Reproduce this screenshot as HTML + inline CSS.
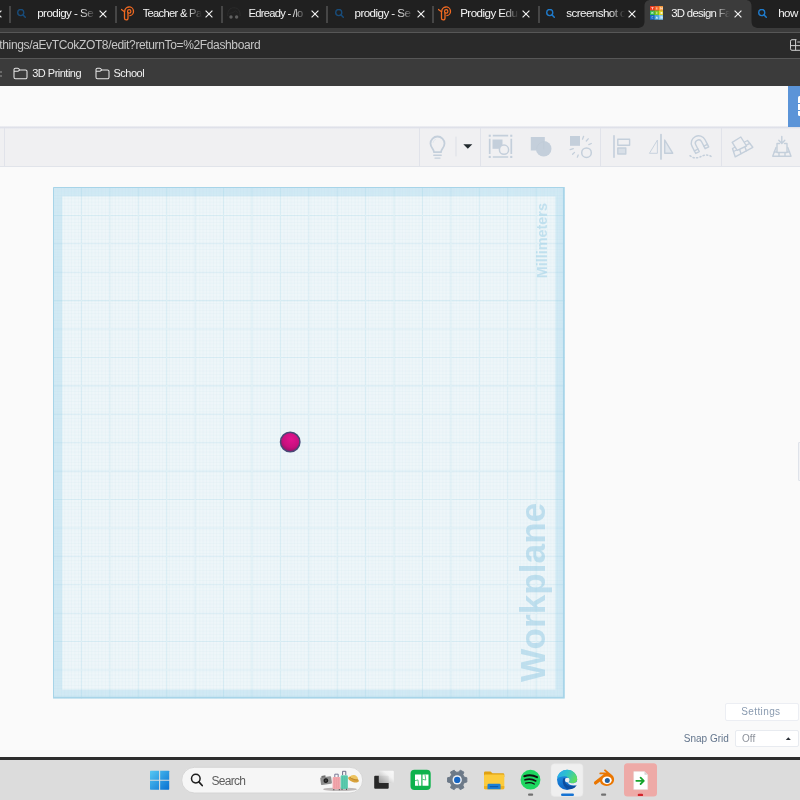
<!DOCTYPE html>
<html><head><meta charset="utf-8">
<style>
*{box-sizing:border-box;margin:0;padding:0}
body{will-change:transform}
html,body{width:800px;height:800px;overflow:hidden;background:#fafafa;font-family:"Liberation Sans",sans-serif;}
.abs{position:absolute}
#tabbar{position:absolute;left:0;top:0;width:800px;height:28px;background:#202020;}
#toolbar{position:absolute;left:0;top:28px;width:800px;height:58.400px;background:#3b3b3b;}
#addr{position:absolute;left:-20px;top:3.7px;width:840px;height:27.300px;background:#2a2a2a;border:1px solid #575757;border-radius:3px;}
#addr span{position:absolute;left:18.300px;top:5.300px;font-size:12px;line-height:14px;color:#c6c6c6;letter-spacing:-0.360px;white-space:nowrap}
.tab{position:absolute;top:0;height:28px;color:#f4f4f4;font-size:11.6px;line-height:26px;white-space:nowrap;letter-spacing:-0.55px;overflow:hidden;-webkit-mask-image:linear-gradient(90deg,#000 0,#000 44px,rgba(0,0,0,0.25) 55px,transparent 59px);mask-image:linear-gradient(90deg,#000 0,#000 44px,rgba(0,0,0,0.25) 55px,transparent 59px)}
.tsep{position:absolute;top:6px;width:2px;height:17px;background:#464646}
.x{position:absolute;top:8px;width:10px;height:10px}
#tc-top{position:absolute;left:0;top:86px;width:800px;height:42px;background:#fafafa;}
#tc-bar{position:absolute;left:0;top:126px;width:800px;height:41px;background:linear-gradient(#f3f3f6 0,#dddfe8 1.300px,#e6e7ee 2.200px,#f0f0f2 3px);border-bottom:1px solid #e1e4ea;}
.vd{position:absolute;top:128px;width:1px;height:38px;background:#e1e3ea}
#taskbar{position:absolute;left:0;top:756.500px;width:800px;height:44px;background:#dcdcdc;border-top:3.300px solid #2d2d2d}
#bm{position:absolute;left:0;top:31px;width:800px;height:27px}
.bmt{position:absolute;top:8px;font-size:11px;line-height:13px;color:#f1f1f1;letter-spacing:-0.5px;white-space:nowrap}
</style></head>
<body>
<div id="tabbar">
<svg class="abs" style="left:-6.5px;top:10px" width="8" height="8" viewBox="0 0 8 8"><path d="M0.6 0.6L7.4 7.4M7.4 0.6L0.6 7.4" stroke="#f2f2f2" stroke-width="1.15" fill="none"/></svg>
<svg class="abs" style="left:637px;top:0" width="122" height="28" viewBox="0 0 122 28"><path d="M0 28C5 28 7.5 26 7.5 21V6C7.5 2 10 0 13.5 0H108.5C112 0 114.5 2 114.5 6V21C114.5 26 117 28 122 28Z" fill="#3b3b3b"/></svg>
<div class="tsep" style="left:9.00px"></div>
<svg class="abs" style="left:17.3px;top:9px" width="10" height="10" viewBox="0 0 10 10"><circle cx="3.75" cy="3.5" r="3.05" fill="none" stroke="#184c7a" stroke-width="1.35"/><path d="M6.1 5.9L8.3 8.2" stroke="#184c7a" stroke-width="1.5" stroke-linecap="round"/></svg>
<div class="tab" style="left:37.20px;width:59.00px;font-size:11.6px;letter-spacing:-0.55px"><span>prodigy - Se</span></div>
<svg class="abs" style="left:99.3px;top:10px" width="8" height="8" viewBox="0 0 8 8"><path d="M0.6 0.6L7.4 7.4M7.4 0.6L0.6 7.4" stroke="#f2f2f2" stroke-width="1.15" fill="none"/></svg>
<div class="tsep" style="left:114.75px"></div>
<svg class="abs" style="left:121.05px;top:6px" width="15" height="15" viewBox="0 0 15 15" fill="none" stroke="#f26a21" stroke-linecap="round" stroke-linejoin="round"><path d="M0.4 3.5L3.5 5.7V12.2a1.75 1.75 0 0 0 3.5 0V6.8" stroke-width="1.3"/><path d="M3.7 5.4A4.4 4.4 0 1 1 8.9 9.7" stroke-width="1.3"/><circle cx="8.2" cy="5.4" r="1.7" stroke-width="1.2"/></svg>
<div class="tab" style="left:142.65px;width:59.30px;font-size:11.2px;letter-spacing:-0.7px"><span>Teacher &amp; Pa</span></div>
<svg class="abs" style="left:205.05px;top:10px" width="8" height="8" viewBox="0 0 8 8"><path d="M0.6 0.6L7.4 7.4M7.4 0.6L0.6 7.4" stroke="#f2f2f2" stroke-width="1.15" fill="none"/></svg>
<div class="tsep" style="left:220.50px"></div>
<svg class="abs" style="left:226.5px;top:7px" width="15" height="13" viewBox="0 0 15 13"><path d="M0.8 9C0.3 3.500 3 0.800 6.900 0.800S13.500 3.500 13 9" fill="none" stroke="#2c2c2c" stroke-width="1"/><path d="M2 6.500L6 5.500L8.500 3.800L11 5.800" fill="none" stroke="#2a2a2a" stroke-width="0.800"/><circle cx="4" cy="10" r="1.700" fill="#5f5f5f"/><circle cx="9.600" cy="10" r="1.700" fill="#5f5f5f"/></svg>
<div class="tab" style="left:248.40px;width:59.30px;font-size:11.2px;letter-spacing:-0.72px"><span>Edready - /lo</span></div>
<svg class="abs" style="left:310.8px;top:10px" width="8" height="8" viewBox="0 0 8 8"><path d="M0.6 0.6L7.4 7.4M7.4 0.6L0.6 7.4" stroke="#f2f2f2" stroke-width="1.15" fill="none"/></svg>
<div class="tsep" style="left:326.30px"></div>
<svg class="abs" style="left:334.6px;top:9px" width="10" height="10" viewBox="0 0 10 10"><circle cx="3.75" cy="3.5" r="3.05" fill="none" stroke="#184c7a" stroke-width="1.35"/><path d="M6.1 5.9L8.3 8.2" stroke="#184c7a" stroke-width="1.5" stroke-linecap="round"/></svg>
<div class="tab" style="left:354.50px;width:59.00px;font-size:11.6px;letter-spacing:-0.55px"><span>prodigy - Se</span></div>
<svg class="abs" style="left:416.6px;top:10px" width="8" height="8" viewBox="0 0 8 8"><path d="M0.6 0.6L7.4 7.4M7.4 0.6L0.6 7.4" stroke="#f2f2f2" stroke-width="1.15" fill="none"/></svg>
<div class="tsep" style="left:432.00px"></div>
<svg class="abs" style="left:438.3px;top:6px" width="15" height="15" viewBox="0 0 15 15" fill="none" stroke="#f26a21" stroke-linecap="round" stroke-linejoin="round"><path d="M0.4 3.5L3.5 5.7V12.2a1.75 1.75 0 0 0 3.5 0V6.8" stroke-width="1.3"/><path d="M3.7 5.4A4.4 4.4 0 1 1 8.9 9.7" stroke-width="1.3"/><circle cx="8.2" cy="5.4" r="1.7" stroke-width="1.2"/></svg>
<div class="tab" style="left:460.20px;width:59.00px;font-size:11.6px;letter-spacing:-0.55px"><span>Prodigy Edu</span></div>
<svg class="abs" style="left:522.3px;top:10px" width="8" height="8" viewBox="0 0 8 8"><path d="M0.6 0.6L7.4 7.4M7.4 0.6L0.6 7.4" stroke="#f2f2f2" stroke-width="1.15" fill="none"/></svg>
<div class="tsep" style="left:538.00px"></div>
<svg class="abs" style="left:546px;top:9px" width="10" height="10" viewBox="0 0 10 10"><circle cx="3.75" cy="3.5" r="3.05" fill="none" stroke="#1f7bcc" stroke-width="1.35"/><path d="M6.1 5.9L8.3 8.2" stroke="#1f7bcc" stroke-width="1.5" stroke-linecap="round"/></svg>
<div class="tab" style="left:566.20px;width:59.00px;font-size:11.6px;letter-spacing:-0.55px"><span>screenshot o</span></div>
<svg class="abs" style="left:628.3px;top:10px" width="8" height="8" viewBox="0 0 8 8"><path d="M0.6 0.6L7.4 7.4M7.4 0.6L0.6 7.4" stroke="#f2f2f2" stroke-width="1.15" fill="none"/></svg>
<svg class="abs" style="left:649.6px;top:6.45px" width="13.7" height="13.8" viewBox="0 0 14 14">
<rect x="0" y="0" width="4.8" height="4.8" fill="#ef3d22"/><rect x="4.6" y="0" width="4.8" height="4.8" fill="#f6682a"/><rect x="9.2" y="0" width="4.8" height="4.8" fill="#fb9a3a"/>
<rect x="0" y="4.6" width="4.8" height="4.8" fill="#2fb84d"/><rect x="4.6" y="4.6" width="4.8" height="4.8" fill="#7cc522"/><rect x="9.2" y="4.6" width="4.8" height="4.8" fill="#dfd224"/>
<rect x="0" y="9.2" width="4.8" height="4.8" fill="#1766c2"/><rect x="4.6" y="9.2" width="4.8" height="4.8" fill="#4ba9e2"/><rect x="9.2" y="9.2" width="4.8" height="4.8" fill="#7fc6f1"/>
<g fill="#fff" opacity="0.85"><path d="M1.4 1.3H3.6V2H2.9V3.6H2.1V2H1.4Z"/><rect x="6.6" y="1.3" width="0.8" height="2.3"/><path d="M10.5 1.3H11.2L12.3 2.8V1.3H12.9V3.6H12.2L11.1 2.1V3.6H10.5Z"/>
<path d="M1.5 5.9H2.2V6.9L3.1 5.9H3.9L2.9 7L3.9 8.2H3.1L2.2 7.2V8.2H1.5Z"/><rect x="6.6" y="5.9" width="0.8" height="2.3"/><rect x="10.8" y="6.1" width="1.9" height="1.9"/>
<path d="M1.6 10.5H3.3V11.1H2.3V12.2H3.3V12.8H1.6Z" opacity="0.6"/><path d="M7 10.4L8.3 12.8H5.7Z"/><path d="M10.6 10.5H12A1.1 1.15 0 0 1 12 12.8H10.6Z" opacity="0.7"/></g></svg>
<div class="tab" style="left:671.20px;width:60.00px;font-size:11.4px;letter-spacing:-0.7px"><span>3D design Fa</span></div>
<svg class="abs" style="left:734.3px;top:10px" width="8" height="8" viewBox="0 0 8 8"><path d="M0.6 0.6L7.4 7.4M7.4 0.6L0.6 7.4" stroke="#f2f2f2" stroke-width="1.15" fill="none"/></svg>
<svg class="abs" style="left:758.3px;top:9px" width="10" height="10" viewBox="0 0 10 10"><circle cx="3.75" cy="3.5" r="3.05" fill="none" stroke="#1f7bcc" stroke-width="1.35"/><path d="M6.1 5.9L8.3 8.2" stroke="#1f7bcc" stroke-width="1.5" stroke-linecap="round"/></svg>
<div class="tab" style="left:778.20px;width:59.00px;font-size:11.6px;letter-spacing:-0.55px"><span>how t</span></div>
</div>
<div id="toolbar"><div id="addr"><span>things/aEvTCokZOT8/edit?returnTo=%2Fdashboard</span></div><div id="bm">
<div class="abs" style="left:0;top:12px;width:1.5px;height:1.5px;background:#6a6a6a"></div><div class="abs" style="left:0;top:16px;width:1.5px;height:1.5px;background:#6a6a6a"></div>
<svg class="abs" style="left:12.5px;top:7.500px" width="15" height="13" viewBox="0 0 15 13"><path d="M1 3.2V10.3a1.500 1.500 0 0 0 1.500 1.500H12.500a1.500 1.500 0 0 0 1.500-1.500V4.500a1.500 1.500 0 0 0-1.500-1.500H6.800L5.600 1.700a1.300 1.300 0 0 0-1-.5H2.500A1.500 1.500 0 0 0 1 2.700Z M1 4.200H5.200L6.800 3" fill="none" stroke="#e6e6e6" stroke-width="1.050" stroke-linejoin="round"/></svg>
<span class="bmt" style="left:32.2px">3D Printing</span>
<svg class="abs" style="left:94.5px;top:7.500px" width="15" height="13" viewBox="0 0 15 13"><path d="M1 3.2V10.3a1.500 1.500 0 0 0 1.500 1.500H12.500a1.500 1.500 0 0 0 1.500-1.500V4.500a1.500 1.500 0 0 0-1.500-1.500H6.800L5.600 1.700a1.300 1.300 0 0 0-1-.5H2.500A1.500 1.500 0 0 0 1 2.700Z M1 4.200H5.200L6.800 3" fill="none" stroke="#e6e6e6" stroke-width="1.050" stroke-linejoin="round"/></svg>
<span class="bmt" style="left:113.5px">School</span>
</div>
<svg class="abs" style="left:789px;top:9px" width="12" height="16" viewBox="789 37 12 16"><path d="M796.500 39.700H792a1.500 1.500 0 0 0 -1.500 1.500V48.800a1.500 1.500 0 0 0 1.500 1.500H802 M795.600 39.700V50.300 M790.500 45.600H802 M797.300 42H801" fill="none" stroke="#cfcfcf" stroke-width="1"/></svg>
</div>
<div id="tc-top"></div>
<div id="tc-bar"></div>
<div class="vd" style="left:4px"></div><div class="vd" style="left:419.200px"></div><div class="vd" style="left:480.200px"></div><div class="vd" style="left:600.200px"></div><div class="vd" style="left:721.100px"></div>
<svg id="tcicons" class="abs" style="left:400px;top:128px" width="400" height="38" viewBox="400 128 400 38" fill="none" stroke="#c4cfdb" stroke-linecap="round" stroke-linejoin="round">
<!-- bulb -->
<path d="M434 152.2C434 149 430.500 147.800 430.500 143.500a7 7 0 0 1 14 0C444.500 147.800 441 149 441 152.200Z" stroke-width="1.800"/>
<path d="M433.800 155.300H441.200M435 158.100H440" stroke-width="1.400"/>
<path d="M433 142.500a4.500 4.500 0 0 1 2.600-3.300" stroke-width="0.9" stroke="#dfe5ec"/>
<path d="M456 137V156" stroke="#dcdfe6" stroke-width="1"/>
<path d="M463.300 144.200H472.300L467.800 148.800Z" fill="#222a2e" stroke="none"/>
<!-- group -->
<g stroke-width="1.700" stroke-linecap="butt"><path d="M492.800 135.700H508.200M492.800 157H508.200M489.700 138.800V154M511.300 138.800V154"/>
<rect x="492.500" y="139.500" width="10" height="9.300" fill="#c4cfdb" stroke="none"/>
<circle cx="504" cy="149.700" r="4.600" fill="#f0f0f2" stroke-width="1.500"/></g>
<g fill="#c4cfdb" stroke="none"><rect x="488.700" y="134.700" width="2.100" height="2.100"/><rect x="510.200" y="134.700" width="2.100" height="2.100"/><rect x="488.700" y="155.900" width="2.100" height="2.100"/><rect x="510.200" y="155.900" width="2.100" height="2.100"/></g>
<!-- union -->
<rect x="530.800" y="137" width="14" height="13.500" fill="#c4cfdb" stroke="none"/><circle cx="543.700" cy="148.800" r="7.800" fill="#c4cfdb" stroke="none"/>
<path d="M543.700 141.800a7 7 0 0 0 -7 7M543.700 141.800V148.800" stroke="#bcc8d5" stroke-width="0.500"/>
<!-- ungroup -->
<rect x="570" y="136" width="10" height="9.800" fill="#c4cfdb" stroke="none"/>
<circle cx="586.500" cy="152.700" r="4.800" stroke-width="1.500"/>
<path d="M582.500 139.200L583.600 136.300M586.300 141L588.200 138.800M588.800 144.600L591.300 143.500M573.300 148.700L570.200 149.700M574.500 152.400L572.600 154.300M578.200 155L577.300 157.200" stroke-width="1.300"/>
<!-- align -->
<path d="M614 135.800V157.200" stroke-width="1.600"/>
<rect x="617.800" y="139.300" width="11.800" height="6" stroke-width="1.400" fill="#f0f0f2"/>
<rect x="617.800" y="148" width="8" height="6" stroke-width="1.400" fill="#d8dfe7"/>
<!-- mirror -->
<path d="M661 134.500V159" stroke-width="1.700"/>
<path d="M657.400 140.500V153.300H649.800Z" stroke-width="0.900"/>
<path d="M664.700 140V153.200H672.700Z" stroke-width="1.400" fill="#e2e7ed"/>
<!-- magnet -->
<g transform="translate(698.800 143.500) rotate(-27)" stroke-width="1.400"><path d="M-7.300 7.500V-0.500a7.300 7.300 0 0 1 14.600 0V7.500H3.300V-0.300a3.300 3.300 0 0 0 -6.600 0V7.500Z"/><path d="M-7.300 4.600H-3.300M3.300 4.600H7.300"/></g>
<path d="M690 155.700C694 159 698 158 701 156.500S708 154 712 157" stroke-width="1.500" stroke-dasharray="1.200 2.300"/>
<!-- workplane -->
<g stroke-width="1.400"><path d="M732.500 148.500L747.500 140.500L752.800 147.300L735.200 156.800Z"/><path d="M733.600 151.500L749.800 143.300M739.300 148.400L741 153.700M744.300 145.600L746.400 150.800"/><path d="M732.200 142.300L740.800 137L746.500 146L737.200 150.300Z" fill="#f0f0f2"/></g>
<!-- drop -->
<g stroke-width="1.400"><path d="M776 147.500L772.700 156.200H791L787.800 147.500"/><path d="M774.300 152H789.500M779 152.300V156M785 152.300V156"/><path d="M779.500 143.500H777V152.500H787V143.500H784.500" fill="#f0f0f2"/><path d="M781.800 136.500V143.300M778.800 140.300L781.800 143.500L784.800 140.300"/></g>
</svg>
<div class="abs" style="left:788px;top:86px;width:12px;height:40.500px;background:#5b94d8"></div>
<div class="abs" style="left:798.200px;top:96.300px;width:3px;height:7px;background:#fff;border-radius:1.500px 0 0 0"></div><div class="abs" style="left:798.200px;top:104.200px;width:3px;height:6px;background:#fff"></div><div class="abs" style="left:798.200px;top:111px;width:3px;height:5.300px;background:#fff;border-radius:0 0 0 1.500px"></div>
<div class="abs" style="left:797.800px;top:442px;width:4px;height:39px;border:1px solid #dfe3ea;background:#f2f3f6;border-radius:1px"></div>


<svg id="wp" class="abs" style="left:0;top:167px" width="800" height="590" viewBox="0 167 800 590">
<defs><radialGradient id="sph" cx="0.55" cy="0.35" r="0.7"><stop offset="0" stop-color="#e3128f"/><stop offset="0.6" stop-color="#c80f7e"/><stop offset="1" stop-color="#8a0f60"/></radialGradient></defs>
<rect x="53" y="187" width="511.6" height="511.4" fill="#fefefd"/>
<path d="M53 187H564.6V698.4H53Z M62.3 196.4V689.4H555.4V196.4Z" fill="#ddf0f8" fill-rule="evenodd"/>
<text transform="translate(545.4 682) rotate(-90)" font-family="Liberation Sans" font-weight="bold" font-size="35.2" fill="#b5dbec" fill-opacity="0.740">Workplane</text>
<text transform="translate(547 278.3) rotate(-90)" font-family="Liberation Sans" font-weight="bold" font-size="14.4" fill="#b5dbec" fill-opacity="0.7">Millimeters</text>
<path d="M54.42 187.0V698.4M55.84 187.0V698.4M57.26 187.0V698.4M58.68 187.0V698.4M60.11 187.0V698.4M61.53 187.0V698.4M62.95 187.0V698.4M64.37 187.0V698.4M65.79 187.0V698.4M67.21 187.0V698.4M68.63 187.0V698.4M70.05 187.0V698.4M71.47 187.0V698.4M72.90 187.0V698.4M74.32 187.0V698.4M75.74 187.0V698.4M77.16 187.0V698.4M78.58 187.0V698.4M80.00 187.0V698.4M82.84 187.0V698.4M84.26 187.0V698.4M85.69 187.0V698.4M87.11 187.0V698.4M88.53 187.0V698.4M89.95 187.0V698.4M91.37 187.0V698.4M92.79 187.0V698.4M94.21 187.0V698.4M95.63 187.0V698.4M97.05 187.0V698.4M98.48 187.0V698.4M99.90 187.0V698.4M101.32 187.0V698.4M102.74 187.0V698.4M104.16 187.0V698.4M105.58 187.0V698.4M107.00 187.0V698.4M108.42 187.0V698.4M111.27 187.0V698.4M112.69 187.0V698.4M114.11 187.0V698.4M115.53 187.0V698.4M116.95 187.0V698.4M118.37 187.0V698.4M119.79 187.0V698.4M121.21 187.0V698.4M122.63 187.0V698.4M124.06 187.0V698.4M125.48 187.0V698.4M126.90 187.0V698.4M128.32 187.0V698.4M129.74 187.0V698.4M131.16 187.0V698.4M132.58 187.0V698.4M134.00 187.0V698.4M135.42 187.0V698.4M136.85 187.0V698.4M139.69 187.0V698.4M141.11 187.0V698.4M142.53 187.0V698.4M143.95 187.0V698.4M145.37 187.0V698.4M146.79 187.0V698.4M148.21 187.0V698.4M149.64 187.0V698.4M151.06 187.0V698.4M152.48 187.0V698.4M153.90 187.0V698.4M155.32 187.0V698.4M156.74 187.0V698.4M158.16 187.0V698.4M159.58 187.0V698.4M161.00 187.0V698.4M162.43 187.0V698.4M163.85 187.0V698.4M165.27 187.0V698.4M168.11 187.0V698.4M169.53 187.0V698.4M170.95 187.0V698.4M172.37 187.0V698.4M173.79 187.0V698.4M175.22 187.0V698.4M176.64 187.0V698.4M178.06 187.0V698.4M179.48 187.0V698.4M180.90 187.0V698.4M182.32 187.0V698.4M183.74 187.0V698.4M185.16 187.0V698.4M186.58 187.0V698.4M188.01 187.0V698.4M189.43 187.0V698.4M190.85 187.0V698.4M192.27 187.0V698.4M193.69 187.0V698.4M196.53 187.0V698.4M197.95 187.0V698.4M199.37 187.0V698.4M200.80 187.0V698.4M202.22 187.0V698.4M203.64 187.0V698.4M205.06 187.0V698.4M206.48 187.0V698.4M207.90 187.0V698.4M209.32 187.0V698.4M210.74 187.0V698.4M212.16 187.0V698.4M213.59 187.0V698.4M215.01 187.0V698.4M216.43 187.0V698.4M217.85 187.0V698.4M219.27 187.0V698.4M220.69 187.0V698.4M222.11 187.0V698.4M224.95 187.0V698.4M226.38 187.0V698.4M227.80 187.0V698.4M229.22 187.0V698.4M230.64 187.0V698.4M232.06 187.0V698.4M233.48 187.0V698.4M234.90 187.0V698.4M236.32 187.0V698.4M237.74 187.0V698.4M239.17 187.0V698.4M240.59 187.0V698.4M242.01 187.0V698.4M243.43 187.0V698.4M244.85 187.0V698.4M246.27 187.0V698.4M247.69 187.0V698.4M249.11 187.0V698.4M250.53 187.0V698.4M253.38 187.0V698.4M254.80 187.0V698.4M256.22 187.0V698.4M257.64 187.0V698.4M259.06 187.0V698.4M260.48 187.0V698.4M261.90 187.0V698.4M263.32 187.0V698.4M264.75 187.0V698.4M266.17 187.0V698.4M267.59 187.0V698.4M269.01 187.0V698.4M270.43 187.0V698.4M271.85 187.0V698.4M273.27 187.0V698.4M274.69 187.0V698.4M276.11 187.0V698.4M277.54 187.0V698.4M278.96 187.0V698.4M281.80 187.0V698.4M283.22 187.0V698.4M284.64 187.0V698.4M286.06 187.0V698.4M287.48 187.0V698.4M288.90 187.0V698.4M290.33 187.0V698.4M291.75 187.0V698.4M293.17 187.0V698.4M294.59 187.0V698.4M296.01 187.0V698.4M297.43 187.0V698.4M298.85 187.0V698.4M300.27 187.0V698.4M301.69 187.0V698.4M303.12 187.0V698.4M304.54 187.0V698.4M305.96 187.0V698.4M307.38 187.0V698.4M310.22 187.0V698.4M311.64 187.0V698.4M313.06 187.0V698.4M314.48 187.0V698.4M315.91 187.0V698.4M317.33 187.0V698.4M318.75 187.0V698.4M320.17 187.0V698.4M321.59 187.0V698.4M323.01 187.0V698.4M324.43 187.0V698.4M325.85 187.0V698.4M327.27 187.0V698.4M328.70 187.0V698.4M330.12 187.0V698.4M331.54 187.0V698.4M332.96 187.0V698.4M334.38 187.0V698.4M335.80 187.0V698.4M338.64 187.0V698.4M340.06 187.0V698.4M341.49 187.0V698.4M342.91 187.0V698.4M344.33 187.0V698.4M345.75 187.0V698.4M347.17 187.0V698.4M348.59 187.0V698.4M350.01 187.0V698.4M351.43 187.0V698.4M352.85 187.0V698.4M354.28 187.0V698.4M355.70 187.0V698.4M357.12 187.0V698.4M358.54 187.0V698.4M359.96 187.0V698.4M361.38 187.0V698.4M362.80 187.0V698.4M364.22 187.0V698.4M367.07 187.0V698.4M368.49 187.0V698.4M369.91 187.0V698.4M371.33 187.0V698.4M372.75 187.0V698.4M374.17 187.0V698.4M375.59 187.0V698.4M377.01 187.0V698.4M378.43 187.0V698.4M379.86 187.0V698.4M381.28 187.0V698.4M382.70 187.0V698.4M384.12 187.0V698.4M385.54 187.0V698.4M386.96 187.0V698.4M388.38 187.0V698.4M389.80 187.0V698.4M391.22 187.0V698.4M392.65 187.0V698.4M395.49 187.0V698.4M396.91 187.0V698.4M398.33 187.0V698.4M399.75 187.0V698.4M401.17 187.0V698.4M402.59 187.0V698.4M404.01 187.0V698.4M405.44 187.0V698.4M406.86 187.0V698.4M408.28 187.0V698.4M409.70 187.0V698.4M411.12 187.0V698.4M412.54 187.0V698.4M413.96 187.0V698.4M415.38 187.0V698.4M416.80 187.0V698.4M418.23 187.0V698.4M419.65 187.0V698.4M421.07 187.0V698.4M423.91 187.0V698.4M425.33 187.0V698.4M426.75 187.0V698.4M428.17 187.0V698.4M429.59 187.0V698.4M431.02 187.0V698.4M432.44 187.0V698.4M433.86 187.0V698.4M435.28 187.0V698.4M436.70 187.0V698.4M438.12 187.0V698.4M439.54 187.0V698.4M440.96 187.0V698.4M442.38 187.0V698.4M443.81 187.0V698.4M445.23 187.0V698.4M446.65 187.0V698.4M448.07 187.0V698.4M449.49 187.0V698.4M452.33 187.0V698.4M453.75 187.0V698.4M455.17 187.0V698.4M456.60 187.0V698.4M458.02 187.0V698.4M459.44 187.0V698.4M460.86 187.0V698.4M462.28 187.0V698.4M463.70 187.0V698.4M465.12 187.0V698.4M466.54 187.0V698.4M467.96 187.0V698.4M469.39 187.0V698.4M470.81 187.0V698.4M472.23 187.0V698.4M473.65 187.0V698.4M475.07 187.0V698.4M476.49 187.0V698.4M477.91 187.0V698.4M480.75 187.0V698.4M482.18 187.0V698.4M483.60 187.0V698.4M485.02 187.0V698.4M486.44 187.0V698.4M487.86 187.0V698.4M489.28 187.0V698.4M490.70 187.0V698.4M492.12 187.0V698.4M493.54 187.0V698.4M494.97 187.0V698.4M496.39 187.0V698.4M497.81 187.0V698.4M499.23 187.0V698.4M500.65 187.0V698.4M502.07 187.0V698.4M503.49 187.0V698.4M504.91 187.0V698.4M506.33 187.0V698.4M509.18 187.0V698.4M510.60 187.0V698.4M512.02 187.0V698.4M513.44 187.0V698.4M514.86 187.0V698.4M516.28 187.0V698.4M517.70 187.0V698.4M519.12 187.0V698.4M520.55 187.0V698.4M521.97 187.0V698.4M523.39 187.0V698.4M524.81 187.0V698.4M526.23 187.0V698.4M527.65 187.0V698.4M529.07 187.0V698.4M530.49 187.0V698.4M531.91 187.0V698.4M533.34 187.0V698.4M534.76 187.0V698.4M537.60 187.0V698.4M539.02 187.0V698.4M540.44 187.0V698.4M541.86 187.0V698.4M543.28 187.0V698.4M544.70 187.0V698.4M546.13 187.0V698.4M547.55 187.0V698.4M548.97 187.0V698.4M550.39 187.0V698.4M551.81 187.0V698.4M553.23 187.0V698.4M554.65 187.0V698.4M556.07 187.0V698.4M557.49 187.0V698.4M558.92 187.0V698.4M560.34 187.0V698.4M561.76 187.0V698.4M563.18 187.0V698.4M53.0 188.42H564.6M53.0 189.84H564.6M53.0 191.26H564.6M53.0 192.68H564.6M53.0 194.10H564.6M53.0 195.52H564.6M53.0 196.94H564.6M53.0 198.36H564.6M53.0 199.78H564.6M53.0 201.21H564.6M53.0 202.63H564.6M53.0 204.05H564.6M53.0 205.47H564.6M53.0 206.89H564.6M53.0 208.31H564.6M53.0 209.73H564.6M53.0 211.15H564.6M53.0 212.57H564.6M53.0 213.99H564.6M53.0 216.83H564.6M53.0 218.25H564.6M53.0 219.67H564.6M53.0 221.09H564.6M53.0 222.51H564.6M53.0 223.93H564.6M53.0 225.36H564.6M53.0 226.78H564.6M53.0 228.20H564.6M53.0 229.62H564.6M53.0 231.04H564.6M53.0 232.46H564.6M53.0 233.88H564.6M53.0 235.30H564.6M53.0 236.72H564.6M53.0 238.14H564.6M53.0 239.56H564.6M53.0 240.98H564.6M53.0 242.40H564.6M53.0 245.24H564.6M53.0 246.66H564.6M53.0 248.08H564.6M53.0 249.50H564.6M53.0 250.93H564.6M53.0 252.35H564.6M53.0 253.77H564.6M53.0 255.19H564.6M53.0 256.61H564.6M53.0 258.03H564.6M53.0 259.45H564.6M53.0 260.87H564.6M53.0 262.29H564.6M53.0 263.71H564.6M53.0 265.13H564.6M53.0 266.55H564.6M53.0 267.97H564.6M53.0 269.39H564.6M53.0 270.81H564.6M53.0 273.65H564.6M53.0 275.07H564.6M53.0 276.50H564.6M53.0 277.92H564.6M53.0 279.34H564.6M53.0 280.76H564.6M53.0 282.18H564.6M53.0 283.60H564.6M53.0 285.02H564.6M53.0 286.44H564.6M53.0 287.86H564.6M53.0 289.28H564.6M53.0 290.70H564.6M53.0 292.12H564.6M53.0 293.54H564.6M53.0 294.96H564.6M53.0 296.38H564.6M53.0 297.80H564.6M53.0 299.22H564.6M53.0 302.06H564.6M53.0 303.49H564.6M53.0 304.91H564.6M53.0 306.33H564.6M53.0 307.75H564.6M53.0 309.17H564.6M53.0 310.59H564.6M53.0 312.01H564.6M53.0 313.43H564.6M53.0 314.85H564.6M53.0 316.27H564.6M53.0 317.69H564.6M53.0 319.11H564.6M53.0 320.53H564.6M53.0 321.95H564.6M53.0 323.37H564.6M53.0 324.79H564.6M53.0 326.21H564.6M53.0 327.63H564.6M53.0 330.48H564.6M53.0 331.90H564.6M53.0 333.32H564.6M53.0 334.74H564.6M53.0 336.16H564.6M53.0 337.58H564.6M53.0 339.00H564.6M53.0 340.42H564.6M53.0 341.84H564.6M53.0 343.26H564.6M53.0 344.68H564.6M53.0 346.10H564.6M53.0 347.52H564.6M53.0 348.94H564.6M53.0 350.36H564.6M53.0 351.78H564.6M53.0 353.21H564.6M53.0 354.63H564.6M53.0 356.05H564.6M53.0 358.89H564.6M53.0 360.31H564.6M53.0 361.73H564.6M53.0 363.15H564.6M53.0 364.57H564.6M53.0 365.99H564.6M53.0 367.41H564.6M53.0 368.83H564.6M53.0 370.25H564.6M53.0 371.67H564.6M53.0 373.09H564.6M53.0 374.51H564.6M53.0 375.93H564.6M53.0 377.35H564.6M53.0 378.77H564.6M53.0 380.20H564.6M53.0 381.62H564.6M53.0 383.04H564.6M53.0 384.46H564.6M53.0 387.30H564.6M53.0 388.72H564.6M53.0 390.14H564.6M53.0 391.56H564.6M53.0 392.98H564.6M53.0 394.40H564.6M53.0 395.82H564.6M53.0 397.24H564.6M53.0 398.66H564.6M53.0 400.08H564.6M53.0 401.50H564.6M53.0 402.92H564.6M53.0 404.35H564.6M53.0 405.77H564.6M53.0 407.19H564.6M53.0 408.61H564.6M53.0 410.03H564.6M53.0 411.45H564.6M53.0 412.87H564.6M53.0 415.71H564.6M53.0 417.13H564.6M53.0 418.55H564.6M53.0 419.97H564.6M53.0 421.39H564.6M53.0 422.81H564.6M53.0 424.23H564.6M53.0 425.65H564.6M53.0 427.07H564.6M53.0 428.49H564.6M53.0 429.91H564.6M53.0 431.34H564.6M53.0 432.76H564.6M53.0 434.18H564.6M53.0 435.60H564.6M53.0 437.02H564.6M53.0 438.44H564.6M53.0 439.86H564.6M53.0 441.28H564.6M53.0 444.12H564.6M53.0 445.54H564.6M53.0 446.96H564.6M53.0 448.38H564.6M53.0 449.80H564.6M53.0 451.22H564.6M53.0 452.64H564.6M53.0 454.06H564.6M53.0 455.49H564.6M53.0 456.91H564.6M53.0 458.33H564.6M53.0 459.75H564.6M53.0 461.17H564.6M53.0 462.59H564.6M53.0 464.01H564.6M53.0 465.43H564.6M53.0 466.85H564.6M53.0 468.27H564.6M53.0 469.69H564.6M53.0 472.53H564.6M53.0 473.95H564.6M53.0 475.37H564.6M53.0 476.79H564.6M53.0 478.21H564.6M53.0 479.63H564.6M53.0 481.06H564.6M53.0 482.48H564.6M53.0 483.90H564.6M53.0 485.32H564.6M53.0 486.74H564.6M53.0 488.16H564.6M53.0 489.58H564.6M53.0 491.00H564.6M53.0 492.42H564.6M53.0 493.84H564.6M53.0 495.26H564.6M53.0 496.68H564.6M53.0 498.10H564.6M53.0 500.94H564.6M53.0 502.36H564.6M53.0 503.78H564.6M53.0 505.20H564.6M53.0 506.62H564.6M53.0 508.05H564.6M53.0 509.47H564.6M53.0 510.89H564.6M53.0 512.31H564.6M53.0 513.73H564.6M53.0 515.15H564.6M53.0 516.57H564.6M53.0 517.99H564.6M53.0 519.41H564.6M53.0 520.83H564.6M53.0 522.25H564.6M53.0 523.67H564.6M53.0 525.09H564.6M53.0 526.51H564.6M53.0 529.35H564.6M53.0 530.77H564.6M53.0 532.19H564.6M53.0 533.62H564.6M53.0 535.04H564.6M53.0 536.46H564.6M53.0 537.88H564.6M53.0 539.30H564.6M53.0 540.72H564.6M53.0 542.14H564.6M53.0 543.56H564.6M53.0 544.98H564.6M53.0 546.40H564.6M53.0 547.82H564.6M53.0 549.24H564.6M53.0 550.66H564.6M53.0 552.08H564.6M53.0 553.50H564.6M53.0 554.92H564.6M53.0 557.76H564.6M53.0 559.19H564.6M53.0 560.61H564.6M53.0 562.03H564.6M53.0 563.45H564.6M53.0 564.87H564.6M53.0 566.29H564.6M53.0 567.71H564.6M53.0 569.13H564.6M53.0 570.55H564.6M53.0 571.97H564.6M53.0 573.39H564.6M53.0 574.81H564.6M53.0 576.23H564.6M53.0 577.65H564.6M53.0 579.07H564.6M53.0 580.49H564.6M53.0 581.91H564.6M53.0 583.34H564.6M53.0 586.18H564.6M53.0 587.60H564.6M53.0 589.02H564.6M53.0 590.44H564.6M53.0 591.86H564.6M53.0 593.28H564.6M53.0 594.70H564.6M53.0 596.12H564.6M53.0 597.54H564.6M53.0 598.96H564.6M53.0 600.38H564.6M53.0 601.80H564.6M53.0 603.22H564.6M53.0 604.64H564.6M53.0 606.06H564.6M53.0 607.48H564.6M53.0 608.90H564.6M53.0 610.33H564.6M53.0 611.75H564.6M53.0 614.59H564.6M53.0 616.01H564.6M53.0 617.43H564.6M53.0 618.85H564.6M53.0 620.27H564.6M53.0 621.69H564.6M53.0 623.11H564.6M53.0 624.53H564.6M53.0 625.95H564.6M53.0 627.37H564.6M53.0 628.79H564.6M53.0 630.21H564.6M53.0 631.63H564.6M53.0 633.05H564.6M53.0 634.48H564.6M53.0 635.90H564.6M53.0 637.32H564.6M53.0 638.74H564.6M53.0 640.16H564.6M53.0 643.00H564.6M53.0 644.42H564.6M53.0 645.84H564.6M53.0 647.26H564.6M53.0 648.68H564.6M53.0 650.10H564.6M53.0 651.52H564.6M53.0 652.94H564.6M53.0 654.36H564.6M53.0 655.78H564.6M53.0 657.20H564.6M53.0 658.62H564.6M53.0 660.05H564.6M53.0 661.47H564.6M53.0 662.89H564.6M53.0 664.31H564.6M53.0 665.73H564.6M53.0 667.15H564.6M53.0 668.57H564.6M53.0 671.41H564.6M53.0 672.83H564.6M53.0 674.25H564.6M53.0 675.67H564.6M53.0 677.09H564.6M53.0 678.51H564.6M53.0 679.93H564.6M53.0 681.35H564.6M53.0 682.77H564.6M53.0 684.19H564.6M53.0 685.62H564.6M53.0 687.04H564.6M53.0 688.46H564.6M53.0 689.88H564.6M53.0 691.30H564.6M53.0 692.72H564.6M53.0 694.14H564.6M53.0 695.56H564.6M53.0 696.98H564.6" stroke="#9ccfe0" stroke-width="0.34" stroke-opacity="0.42" fill="none"/>
<path d="M81.42 187.0V698.4M53.0 215.41H564.6M109.84 187.0V698.4M53.0 243.82H564.6M138.27 187.0V698.4M53.0 272.23H564.6M166.69 187.0V698.4M53.0 300.64H564.6M195.11 187.0V698.4M53.0 329.06H564.6M223.53 187.0V698.4M53.0 357.47H564.6M251.96 187.0V698.4M53.0 385.88H564.6M280.38 187.0V698.4M53.0 414.29H564.6M308.80 187.0V698.4M53.0 442.70H564.6M337.22 187.0V698.4M53.0 471.11H564.6M365.64 187.0V698.4M53.0 499.52H564.6M394.07 187.0V698.4M53.0 527.93H564.6M422.49 187.0V698.4M53.0 556.34H564.6M450.91 187.0V698.4M53.0 584.76H564.6M479.33 187.0V698.4M53.0 613.17H564.6M507.76 187.0V698.4M53.0 641.58H564.6M536.18 187.0V698.4M53.0 669.99H564.6" stroke="#8ecbe2" stroke-width="1.050" stroke-opacity="0.3" fill="none"/>
<path d="M53.5 698V187.5H564" stroke="#a7d4e8" stroke-width="1" fill="none"/>
<path d="M563.8 187V697.6H53" stroke="#a7d4e8" stroke-width="1.8" fill="none"/>
<circle cx="290.2" cy="442" r="9.700" fill="url(#sph)" stroke="#4a4776" stroke-width="1.500" style="filter:blur(0.350px)"/>
</svg>
<div class="abs" style="left:724.5px;top:702.5px;width:74.500px;height:18px;background:#fff;border:1px solid #eceef3;border-radius:2px"></div>
<div class="abs" style="left:741.200px;top:705.400px;font-size:10px;letter-spacing:0.400px;line-height:13px;color:#8a9bb0;white-space:nowrap">Settings</div>
<div class="abs" style="left:683.800px;top:731.500px;font-size:10px;line-height:13px;color:#63758c;white-space:nowrap">Snap Grid</div>
<div class="abs" style="left:734.700px;top:729.500px;width:64.300px;height:17.500px;background:#fff;border:1px solid #e8ebf0;border-radius:2px"></div>
<div class="abs" style="left:742px;top:731.700px;font-size:10px;line-height:13px;color:#8d929b;white-space:nowrap">Off</div>
<svg class="abs" style="left:785px;top:736px" width="7" height="5" viewBox="0 0 7 5"><path d="M0.800 3.900L3.300 1.200L5.800 3.900Z" fill="#2a2f36"/></svg>
<div id="taskbar"></div>
<svg class="abs" style="left:130px;top:760px" width="540" height="40" viewBox="130 760 540 40">
<defs>
<linearGradient id="win" x1="0" y1="0" x2="1" y2="1"><stop offset="0" stop-color="#56c8f3"/><stop offset="1" stop-color="#0870d1"/></linearGradient>
<linearGradient id="edg1" x1="0" y1="0" x2="1" y2="1"><stop offset="0" stop-color="#35c1f1"/><stop offset="0.500" stop-color="#1b7fd2"/><stop offset="1" stop-color="#0c4a9e"/></linearGradient>
<linearGradient id="edg2" x1="0" y1="0.200" x2="1" y2="0.600"><stop offset="0" stop-color="#2aa9f0"/><stop offset="0.450" stop-color="#2ec2c9"/><stop offset="1" stop-color="#5fe05a"/></linearGradient><linearGradient id="edgb" x1="0.200" y1="0" x2="0.600" y2="1"><stop offset="0" stop-color="#2399e6"/><stop offset="1" stop-color="#0b5cc0"/></linearGradient>
<linearGradient id="tv" x1="0" y1="1" x2="1" y2="0"><stop offset="0" stop-color="#a4a4a4"/><stop offset="0.450" stop-color="#dcdcdc"/><stop offset="0.650" stop-color="#f4f4f4"/><stop offset="1" stop-color="#fcfcfc"/></linearGradient>
</defs>
<!-- windows logo -->
<g fill="url(#win)"><rect x="150" y="770.700" width="19.200" height="19" rx="0.600"/></g>
<path d="M159.600 770V790.500M149.500 780.200H170" stroke="#dcdcdc" stroke-width="1.100"/>
<!-- search pill -->
<rect x="181.700" y="767.300" width="181" height="25.700" rx="12.850" fill="#f6f6f6" stroke="#d2d2d2" stroke-width="0.900"/>
<circle cx="195.800" cy="778.600" r="4.300" fill="none" stroke="#1e1e1e" stroke-width="1.500"/><path d="M198.900 781.900L202.200 785.500" stroke="#1e1e1e" stroke-width="1.700" stroke-linecap="round"/>
<text x="211.500" y="784.800" font-family="Liberation Sans" font-size="12" letter-spacing="-0.700" fill="#5e5e5e">Search</text>
<!-- luggage art -->
<ellipse cx="340" cy="789.300" rx="17" ry="1.800" fill="#a9a3a3" opacity="0.750"/>
<g transform="rotate(-8 326 780)"><rect x="320.500" y="776.800" width="11" height="7.600" rx="1" fill="#8d8d8d"/><rect x="322" y="775.300" width="4" height="2" fill="#6e6e6e"/><circle cx="325.800" cy="780.600" r="2.400" fill="#1f1f1f"/><circle cx="325.800" cy="780.600" r="1" fill="#444"/></g>
<path d="M334.800 777V774.200H338.200V777" fill="none" stroke="#6d6a8a" stroke-width="0.900"/>
<rect x="332.600" y="776.900" width="7.900" height="12.300" rx="1.200" fill="#f2a7ad"/><path d="M334.600 778V788.500M336.600 778V788.500M338.500 778V788.500" stroke="#e8949c" stroke-width="0.500"/>
<path d="M342.600 775.200V771.300H345.800V775.200" fill="none" stroke="#5b5d7d" stroke-width="0.900"/>
<rect x="340.700" y="775.200" width="7.200" height="13.700" rx="1.200" fill="#5fcdb2"/><path d="M342.500 776V788.200M344.300 776V788.200M346.100 776V788.200" stroke="#48b89c" stroke-width="0.500"/>
<rect x="333.300" y="789" width="1" height="1.200" fill="#555"/><rect x="338.800" y="789" width="1" height="1.200" fill="#555"/><rect x="341.500" y="788.700" width="1" height="1.300" fill="#555"/><rect x="346" y="788.700" width="1" height="1.300" fill="#555"/>
<g transform="rotate(18 354 778)"><ellipse cx="354" cy="779.600" rx="5.600" ry="2.600" fill="#d9a23c"/><path d="M349.800 778.800C350 774 358 774 358.200 778.800Z" fill="#edc461"/><path d="M349.800 778.500C352 779.800 356 779.800 358.200 778.500" stroke="#b9822a" stroke-width="0.800" fill="none"/></g>
<!-- task view -->
<rect x="374.200" y="775.800" width="14.500" height="13" rx="1" fill="#272727"/>
<rect x="378.800" y="770.800" width="15" height="12.300" rx="1" fill="url(#tv)" opacity="0.930"/>
<!-- green app -->
<rect x="410.500" y="769.800" width="20.200" height="20.200" rx="4" fill="#0eb24c"/>
<path d="M415 774.600H421.300V785.800H415Z M422.500 774.600H428.500V785.800H422.500Z" fill="#fff"/>
<path d="M415 780.700L418 779.900L418.600 785.800M422.500 779.300L425.800 780L425 774.600" stroke="#0eb24c" stroke-width="0.700" fill="none"/>
<!-- gear -->
<g transform="translate(457.2 779.9) rotate(90) scale(0.93)"><path d="M-2.300 -10.400H2.300L3 -7.500L5.600 -6.100L8.400 -7.200L10.500 -3.300L8.300 -1.300V1.300L10.500 3.300L8.400 7.200L5.600 6.100L3 7.500L2.300 10.400H-2.300L-3 7.500L-5.600 6.100L-8.400 7.200L-10.500 3.300L-8.300 1.300V-1.300L-10.500 -3.300L-8.400 -7.200L-5.600 -6.100L-3 -7.500Z" fill="#6c7988" stroke="#6c7988" stroke-width="1" stroke-linejoin="round"/><circle r="5" fill="#eef1f5"/><circle r="3.400" fill="#1565c4"/></g>
<!-- folder -->
<path d="M484 772.700a1.300 1.300 0 0 1 1.300 -1.300H490.500L492.500 773.300H503a1.300 1.300 0 0 1 1.300 1.300V777H484Z" fill="#e0a111"/>
<rect x="484" y="774.400" width="20.300" height="14.800" rx="1.300" fill="#fccb3c"/>
<path d="M484 786H504.300V788a1.300 1.300 0 0 1 -1.300 1.300H485.300a1.300 1.300 0 0 1 -1.300 -1.300Z" fill="#eeb11f"/>
<path d="M487.500 785a1.300 1.300 0 0 1 1.300 -1.300H499.300a1.300 1.300 0 0 1 1.300 1.300V789.300H487.500Z" fill="#1b7fd6"/><rect x="489.800" y="786" width="8.500" height="1.300" rx="0.600" fill="#0f5aa8"/>
<!-- spotify -->
<circle cx="530.500" cy="779.700" r="9.900" fill="#1ed760"/>
<path d="M524.300 776.200C528.500 774.800 533.500 775.200 537 777.200" stroke="#111" stroke-width="2" fill="none" stroke-linecap="round"/><path d="M525 779.800C528.500 778.700 532.700 779.100 535.800 780.900" stroke="#111" stroke-width="1.700" fill="none" stroke-linecap="round"/><path d="M525.700 783.100C528.600 782.300 531.800 782.600 534.300 784" stroke="#111" stroke-width="1.400" fill="none" stroke-linecap="round"/>
<rect x="528" y="793.600" width="5.200" height="2.100" rx="1.050" fill="#717171"/>
<!-- edge -->
<rect x="551" y="763.700" width="32" height="32.700" rx="3.500" fill="#efefef" stroke="#e6e6e6" stroke-width="0.600"/>
<g transform="translate(567.1 779.85)">
<circle r="10.1" fill="url(#edgb)"/>
<path d="M-9.900 -2C-9 -7 -4.500 -10.100 0 -10.100C6 -10.100 10.100 -5.500 10.100 -0.500C10.100 2 8 3.500 5.500 3.500C3.500 3.500 2 3 1.900 2.600C2.500 2 2.700 1 2.500 0C2 -2.300 0 -3.700 -2.500 -3.700C-5.500 -3.700 -8.500 -2.500 -9.900 -2Z" fill="url(#edg2)"/>
<path d="M-4 -1.200C-5 2 -4 5.500 -1.500 7.800C1 9.800 5 9.600 7.500 7.800C8.500 7 9.300 6 9.600 5.200C7.500 6.300 4.500 6.600 2 5.800C-0.500 5 -2.300 3 -2.300 0.300C-2.300 -0.500 -2.100 -1.200 -1.800 -1.800C-2.500 -2 -3.500 -1.800 -4 -1.200Z" fill="#0d4c9e"/>
<circle cx="0.200" cy="0.200" r="2.350" fill="#efefef"/>
<path d="M0.500 2.300C1.500 5 6 6.300 9.600 5.200C9.900 4.300 10.100 3 10.100 1.500C8 4 3.500 4 1.900 2.400Z" fill="#efefef"/>
</g>
<rect x="561" y="793.400" width="13" height="2.700" rx="1.350" fill="#1673d3"/>
<!-- blender -->
<path d="M594.300 781.800L603.800 774.300H600.300a0.900 0.900 0 0 1 0 -1.800H606.500L604.300 771a0.900 0.900 0 0 1 1.100 -1.400L612.300 775.300C614.300 777 614.600 780.300 613.500 782.300C612 785 609 785.900 606.500 785.900C603 785.900 600.500 783.800 600.100 781.500L596 784.500C594.600 785.400 593.200 783 594.300 781.800Z" fill="#ea7600"/>
<ellipse cx="607" cy="780.300" rx="4.700" ry="3.900" fill="#fff"/><circle cx="607.300" cy="780.500" r="2.500" fill="#255f9c"/>
<rect x="601" y="793.600" width="5.200" height="2.100" rx="1.050" fill="#717171"/>
<!-- red highlighted app -->
<rect x="624" y="763.300" width="33" height="33.200" rx="3.500" fill="#eeaaa7"/>
<path d="M633.700 771.600H644.500L647.700 774.800V789.600H633.700Z" fill="#fff" stroke="#e2e2e2" stroke-width="0.400"/><path d="M644.500 771.600V774.800H647.700Z" fill="#d4d4d4"/>
<path d="M636.300 780.800H643.300M640.600 777.600L643.800 780.800L640.600 784" stroke="#17a42c" stroke-width="1.800" fill="none" stroke-linecap="round" stroke-linejoin="round"/>
<rect x="637.700" y="793.700" width="5.400" height="2.400" rx="1.200" fill="#d3232b"/>
</svg>

</body></html>
